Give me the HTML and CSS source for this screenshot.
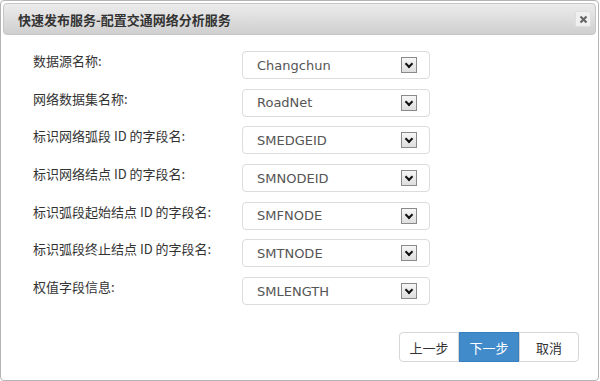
FILE: index.html
```html
<!DOCTYPE html>
<html lang="zh-CN">
<head>
    <meta charset="UTF-8">
    <title>快速发布服务-配置交通网络分析服务</title>
    <link rel="stylesheet" href="styles.css">
</head>
<body>
    <div class="dialog">
        <div class="dialog-header">
            <span class="dialog-title">快速发布服务-配置交通网络分析服务</span>
            <span class="close-btn">
                <svg width="9" height="9" viewBox="0 0 9 9"><path d="M1.5 1.5 L7.5 7.5 M7.5 1.5 L1.5 7.5" stroke="#666" stroke-width="2.2"/></svg>
            </span>
        </div>

        <div class="form">
            <label>数据源名称:</label>
            <div class="select"><span>Changchun</span><i class="arrow"></i></div>

            <label>网络数据集名称:</label>
            <div class="select"><span>RoadNet</span><i class="arrow"></i></div>

            <label>标识网络弧段 ID 的字段名:</label>
            <div class="select"><span>SMEDGEID</span><i class="arrow"></i></div>

            <label>标识网络结点 ID 的字段名:</label>
            <div class="select"><span>SMNODEID</span><i class="arrow"></i></div>

            <label>标识弧段起始结点 ID 的字段名:</label>
            <div class="select"><span>SMFNODE</span><i class="arrow"></i></div>

            <label>标识弧段终止结点 ID 的字段名:</label>
            <div class="select"><span>SMTNODE</span><i class="arrow"></i></div>

            <label>权值字段信息:</label>
            <div class="select"><span>SMLENGTH</span><i class="arrow"></i></div>
        </div>

        <div class="footer">
            <div class="btn-group">
                <button class="btn">上一步</button>
                <button class="btn btn-primary">下一步</button>
                <button class="btn">取消</button>
            </div>
        </div>
    </div>
</body>
</html>
```

FILE: styles.css
```css
body {
    margin: 0;
    padding: 0;
    background: #fff;
    font-family: "Noto Sans CJK SC", "DejaVu Sans", sans-serif;
    font-size: 13px;
    color: #333;
}
.dialog {
    box-sizing: border-box;
    width: 599px;
    height: 381px;
    border: 1px solid #b4b4b4;
    border-radius: 4px;
    padding: 2px;
    background: #fff;
}
.dialog-header {
    height: 30px;
    display: flex;
    align-items: center;
    justify-content: space-between;
    padding: 0 4px 0 14px;
    border: 1px solid #c6c6c6;
    border-radius: 4px;
    background: linear-gradient(#ececec, #cfcfcf);
}
.dialog-title {
    font-size: 13px;
    font-weight: bold;
    color: #333;
}
.close-btn {
    box-sizing: border-box;
    width: 16px;
    height: 16px;
    display: flex;
    align-items: center;
    justify-content: center;
    background: #f0f0f0;
    border: 1px solid #dedede;
    border-radius: 2px;
}
.form {
    display: grid;
    grid-template-columns: 209px 188px;
    grid-auto-rows: 28px;
    row-gap: 9.7px;
    margin: 16px 0 0 30px;
}
.form label {
    padding-top: 1px;
    line-height: 17px;
    color: #333;
}
.select {
    box-sizing: border-box;
    display: flex;
    align-items: center;
    justify-content: space-between;
    padding: 0 12px 0 14px;
    border: 1px solid #dcdcdc;
    border-radius: 4px;
    font-family: "DejaVu Sans", sans-serif;
    font-size: 13px;
    color: #555;
}
.arrow {
    box-sizing: border-box;
    width: 16px;
    height: 16px;
    border: 1px solid #8a8a8a;
    background: linear-gradient(#f6f6f6, #dedede);
    position: relative;
}
.arrow::after {
    content: "";
    position: absolute;
    left: 4px;
    top: 3px;
    width: 4px;
    height: 4px;
    border-right: 2px solid #111;
    border-bottom: 2px solid #111;
    transform: rotate(45deg);
}
.footer {
    display: flex;
    justify-content: flex-end;
    margin-top: 27px;
    padding-right: 17px;
}
.btn-group {
    display: flex;
}
.btn {
    box-sizing: border-box;
    width: 60px;
    height: 30px;
    padding: 0;
    font-family: "Noto Sans CJK SC", sans-serif;
    font-size: 13px;
    color: #333;
    background: #fff;
    border: 1px solid #d6d6d6;
    border-radius: 0;
}
.btn:first-child {
    border-radius: 4px 0 0 4px;
}
.btn:last-child {
    border-radius: 0 4px 4px 0;
}
.btn-primary {
    background: #428bca;
    border-color: #3a7fbd;
    color: #fff;
}
```
